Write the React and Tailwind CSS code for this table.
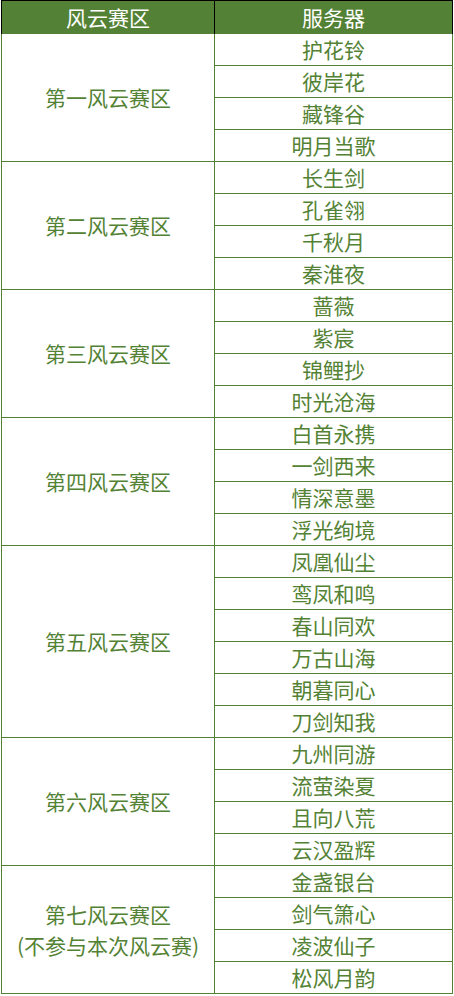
import React from "react";

const groups = [
  { name: ["第一风云赛区"], servers: ["护花铃", "彼岸花", "藏锋谷", "明月当歌"] },
  { name: ["第二风云赛区"], servers: ["长生剑", "孔雀翎", "千秋月", "秦淮夜"] },
  { name: ["第三风云赛区"], servers: ["蔷薇", "紫宸", "锦鲤抄", "时光沧海"] },
  { name: ["第四风云赛区"], servers: ["白首永携", "一剑西来", "情深意墨", "浮光绚境"] },
  { name: ["第五风云赛区"], servers: ["凤凰仙尘", "鸾凤和鸣", "春山同欢", "万古山海", "朝暮同心", "刀剑知我"] },
  { name: ["第六风云赛区"], servers: ["九州同游", "流萤染夏", "且向八荒", "云汉盈辉"] },
  { name: ["第七风云赛区", "(不参与本次风云赛)"], servers: ["金盏银台", "剑气箫心", "凌波仙子", "松风月韵"] },
];

export default function App() {
  return (
    <div
      className="bg-white w-[454px] h-[996px] overflow-hidden"
      style={{ fontFamily: '"Noto Sans CJK SC", "Noto Sans", sans-serif' }}
    >
      <div className="ml-px w-[452px]">
        {/* header */}
        <div className="flex h-[34px] border-t border-black bg-[#538135] text-white text-[21px] leading-none">
          <div className="w-[214px] border-l border-r border-black flex items-center justify-center">
            风云赛区
          </div>
          <div className="w-[238px] border-r border-black flex items-center justify-center">
            服务器
          </div>
        </div>
        {/* body */}
        {groups.map((g, gi) => (
          <div key={gi} className="flex border-b border-[#538135] text-[#548235] text-[21px] leading-none">
            <div className="w-[214px] border-l border-r border-[#538135] flex flex-col items-center justify-center gap-[10px]">
              {g.name.map((n, ni) => (
                <div key={ni}>{n}</div>
              ))}
            </div>
            <div className="w-[238px] border-r border-[#538135] flex flex-col divide-y divide-[#538135]">
              {g.servers.map((s, si) => (
                <div key={si} className="flex items-center justify-center h-[31px] box-content">
                  {s}
                </div>
              ))}
            </div>
          </div>
        ))}
      </div>
    </div>
  );
}
